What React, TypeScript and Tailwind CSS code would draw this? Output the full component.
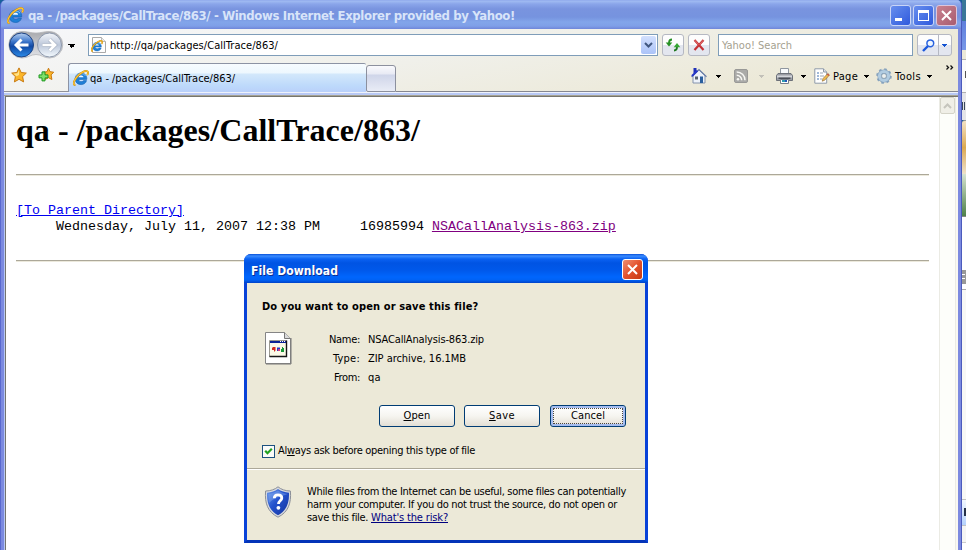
import { useLayoutEffect, useRef } from "react";
import type { ReactNode } from "react";

/** A single line of text whose tracking is adjusted so that it spans `width` pixels. */
function Fit({ width, className = "", children }: { width: number; className?: string; children: ReactNode }) {
  const ref = useRef<HTMLSpanElement>(null);
  useLayoutEffect(() => {
    const el = ref.current;
    if (!el) return;
    el.style.letterSpacing = "0px";
    const natural = el.getBoundingClientRect().width;
    const count = (el.textContent ?? "").length;
    el.style.letterSpacing = `${(width - natural) / count}px`;
  }, [width]);
  return (
    <span ref={ref} className={`inline-block shrink-0 whitespace-pre ${className}`}>
      {children}
    </span>
  );
}

function IELogo({ className = "" }: { className?: string }) {
  return (
    <svg viewBox="0 0 16 16" className={className}>
      <path d="M13.800 9.400H5.600c.2 1.500 1.200 2.200 2.700 2.200 1 0 1.800-.3 2.200-1h3.100c-.8 2.500-2.800 4-5.500 4C4.600 14.600 2.200 12.300 2.200 9S4.600 3 8 3c3.700 0 6.100 2.400 5.800 6.400Z" fill="#1f7fd6" stroke="#1261b4" strokeWidth=".6" />
      <path d="M5.600 7.300h4.900C10.300 6 9.400 5.500 8 5.500S5.900 6 5.600 7.300Z" fill="#eef6ff" />
      <path d="M3.400 6.300C4.300 4.500 6 3.700 8 3.700c2 0 3.600.7 4.500 2.200" fill="none" stroke="#7cc4fa" strokeWidth="1" />
      <path d="M2.400 15C-.3 15.300.4 11.200 3.500 7.300 6.800 3.200 12.100.200 14.300 1.300c1.100.6 1 2-.1 3.800" fill="none" stroke="#c98a10" strokeWidth="1.900" />
      <path d="M2.400 15C-.3 15.300.4 11.200 3.500 7.300 6.800 3.200 12.100.200 14.300 1.300c1.100.6 1 2-.1 3.800" fill="none" stroke="#fcc838" strokeWidth="1.100" />
    </svg>
  );
}

function NavButtons() {
  return (
    <svg viewBox="0 0 56 30" className="h-[30px] w-[56px] shrink-0">
      <defs>
        <linearGradient id="back" x1="0" y1="0" x2="0" y2="1">
          <stop offset="0" stopColor="#b8d0f0" />
          <stop offset=".35" stopColor="#3f78cc" />
          <stop offset=".55" stopColor="#1149a4" />
          <stop offset="1" stopColor="#2b8be8" />
        </linearGradient>
        <linearGradient id="fwd" x1="0" y1="0" x2="0" y2="1">
          <stop offset="0" stopColor="#f4f6fa" />
          <stop offset=".5" stopColor="#bcc7da" />
          <stop offset="1" stopColor="#f4fafe" />
        </linearGradient>
        <linearGradient id="rim" x1="0" y1="0" x2="0" y2="1">
          <stop offset="0" stopColor="#a8a9ad" />
          <stop offset="1" stopColor="#e3e5ea" />
        </linearGradient>
      </defs>
      <path d="M14 1.500c6 0 8.500 1.500 14 1.500s7.500-1.500 13.500-1.500a13 13 0 0 1 0 26.500c-6 0-8-3.500-13.500-3.500S20 28 14 28a13 13 0 0 1 0-26.500Z" fill="url(#rim)" stroke="#b5b6ba" strokeWidth=".8" />
      <circle cx="13.500" cy="15" r="12" fill="url(#back)" stroke="#1c4283" strokeWidth="1" />
      <circle cx="41.500" cy="15" r="12" fill="url(#fwd)" stroke="#8e99ac" strokeWidth="1" />
      <path d="M20.500 15H8.500M13.500 9.500 8 15l5.500 5.500" fill="none" stroke="#fff" strokeWidth="2.900" />
      <path d="M34.500 15h12m-5-5.500 5.500 5.500-5.500 5.500" fill="none" stroke="#a9b3c4" strokeWidth="4" />
      <path d="M34.500 15h12m-5-5.500 5.500 5.500-5.500 5.500" fill="none" stroke="#fff" strokeWidth="2.700" />
    </svg>
  );
}

function Caret({ className = "h-[3px] w-[5px]" }: { className?: string }) {
  return (
    <svg viewBox="0 0 5 3" className={`shrink-0 ${className}`} shapeRendering="crispEdges">
      <path d="M0 0h5v1H4v1H3v1H2V2H1V1H0Z" fill="currentColor" />
    </svg>
  );
}

function StarIcon() {
  return (
    <svg viewBox="0 0 16 16" className="h-4 w-4 shrink-0">
      <path d="m8 .9 2.200 4.600 5.100.6-3.700 3.500 1 5.300L8 12.300l-4.600 2.600 1-5.300L.7 6.100l5.100-.6Z" fill="#fbb62a" stroke="#c87a12" strokeWidth="1" strokeLinejoin="round" />
      <path d="M8 2.800 6.500 6.300l-3.800.5 2.800 2.500L8 8Z" fill="#ffe38a" />
    </svg>
  );
}

function AddStarIcon() {
  return (
    <svg viewBox="0 0 16 16" className="h-4 w-4 shrink-0">
      <path d="m10.500 1.200 1.500 3.500 3.700.5-2.600 2.700.8 4.600-3.400-1.800-3.300 1.800.6-4.600L5.300 5.200 9 4.700Z" fill="#fbb62a" stroke="#c87a12" strokeWidth="1" strokeLinejoin="round" />
      <path d="M4 4.900h3v3h3v3H7v3H4v-3H1v-3h3Z" fill="#7fe06a" stroke="#1f9a22" strokeWidth="1" />
    </svg>
  );
}

function HomeIcon() {
  return (
    <svg viewBox="0 0 16 16" className="h-4 w-4 shrink-0">
      <path d="M2 7.500 8 2l6 5.500V15H2Z" fill="#edf2fa" stroke="#8392ad" strokeWidth="1" />
      <path d="M2.500 0h3v5h-3Z" fill="#2030b8" />
      <path d="M.5 8.800 8 1.500l7.500 7.300" fill="none" stroke="#6a7fa8" strokeWidth="1.200" />
      <path d="M1 8 6.500 2.600" stroke="#2638c8" strokeWidth="2" />
      <path d="M4 8.500h3v3H4Z" fill="#57626f" />
      <path d="M9 8.500h3V15H9Z" fill="#2a5f9e" />
    </svg>
  );
}

function FeedIcon() {
  return (
    <svg viewBox="0 0 16 16" className="h-4 w-4 shrink-0">
      <rect x="1.500" y="1.500" width="13" height="13" rx="1.500" fill="#aaaaa8" stroke="#999997" />
      <circle cx="5" cy="11.200" r="1.300" fill="#f7f7f3" />
      <path d="M3.700 7.200a5 5 0 0 1 5 5M3.700 3.900a8.300 8.300 0 0 1 8.300 8.300" fill="none" stroke="#f7f7f3" strokeWidth="1.500" />
    </svg>
  );
}

function PrinterIcon() {
  return (
    <svg viewBox="0 0 17 16" className="h-4 w-[17px] shrink-0">
      <path d="M4.500 6V.5h8V6" fill="#f8fafc" stroke="#8f969f" />
      <path d="M2 5.500h13l1.500 2V12.500H.5V7.500Z" fill="#9a9da4" stroke="#6d7179" />
      <path d="M1 7.500h15v2H1Z" fill="#d3d5da" />
      <path d="M2.500 9.500h12v1.500h-12Z" fill="#4a4f58" />
      <path d="M4.500 11.500h8v4h-8Z" fill="#fff" stroke="#777e89" />
      <path d="M6 12h3v2H6Z" fill="#2d9aaf" />
      <path d="M9 12h2v2H9Z" fill="#2454b8" />
    </svg>
  );
}

function PageIcon() {
  return (
    <svg viewBox="0 0 16 16" className="h-4 w-4 shrink-0">
      <path d="M.8.8h8.700l3.200 3.200v11.200H.8Z" fill="#fff" stroke="#8f9aa8" />
      <path d="M9.500.8V4h3.200" fill="#dde4ec" stroke="#8f9aa8" />
      <path d="M3 5h2M3 8h2M3 11h2" stroke="#4273b4" strokeWidth="1.200" />
      <path d="M6 5h3M6 8h4M6 11h2" stroke="#9ba5b3" strokeWidth="1" />
      <path d="m8.200 13.200.8-2.700L13.800 5.500l1.700 1.500-4.800 5.200Z" fill="#f1bd50" stroke="#9b733a" strokeWidth=".7" />
      <path d="m13.300 6 1.700 1.500" stroke="#c5504b" strokeWidth="1.400" />
    </svg>
  );
}

function GearIcon() {
  return (
    <svg viewBox="0 0 16 16" className="h-4 w-4 shrink-0">
      <circle cx="8" cy="8" r="6.600" fill="none" stroke="#8aa5be" strokeWidth="2.400" strokeDasharray="2.600 2.584" />
      <circle cx="8" cy="8" r="4.600" fill="none" stroke="#7f9dba" strokeWidth="4" />
      <circle cx="8" cy="8" r="4.600" fill="none" stroke="#b1cce1" strokeWidth="3" />
      <circle cx="8" cy="8" r="2.500" fill="#edf0ee" stroke="#738ea8" strokeWidth=".7" />
    </svg>
  );
}

const toolButton =
  "flex h-[22px] w-[22px] shrink-0 items-center justify-center rounded-[3px] border border-[#b5b8c2] bg-linear-to-b from-[#fdfdfd] from-50% to-[#e3e6ef] to-50%";

function TitleBar() {
  return (
    <header className="flex h-[29px] shrink-0 items-center bg-[linear-gradient(180deg,#89a2ea_0px,#a1bcf2_1px,#8aa5ea_4px,#7994df_9px,#7693df_17px,#82a5ea_22px,#7f9fe8_26px,#6f86d9_29px)] pt-[2px] pl-[6px]">
      <IELogo className="h-[17px] w-[17px] shrink-0" />
      <Fit width={487} className="mt-[1px] ml-[4px] font-['DejaVu_Sans_Condensed','DejaVu_Sans',sans-serif] text-[13px] leading-4 font-bold text-[#d8e4f9]">
        qa - /packages/CallTrace/863/ - Windows Internet Explorer provided by Yahoo!
      </Fit>
      <div className="ml-auto flex gap-[2px] pr-[4px]">
        <div className="flex h-[21px] w-[21px] items-end rounded-[3px] border border-[#c9d5f7] bg-linear-to-br from-[#688eee] to-[#3059dc] p-1">
          <span className="h-[3px] w-[7px] bg-white" />
        </div>
        <div className="flex h-[21px] w-[21px] items-center justify-center rounded-[3px] border border-[#c9d5f7] bg-linear-to-br from-[#688eee] to-[#3059dc]">
          <span className="h-[11px] w-[11px] border border-t-[3px] border-white" />
        </div>
        <div className="flex h-[21px] w-[21px] items-center justify-center rounded-[3px] border border-[#dcc6dc] bg-linear-to-br from-[#c98290] to-[#a85c70]">
          <svg viewBox="0 0 11 11" className="h-[11px] w-[11px]">
            <path d="m1 1 9 9M10 1l-9 9" stroke="#fff" strokeWidth="2" />
          </svg>
        </div>
      </div>
    </header>
  );
}

function AddressRow() {
  return (
    <div className="flex h-[32px] shrink-0 items-center pl-[4px]">
      <NavButtons />
      <Caret className="mt-[2px] ml-[4px] h-[4px] w-[7px]" />
      <div className="ml-[13px] flex h-[22px] w-[570px] items-center border border-[#7f9db9] bg-white pr-[1px] pl-[2px]">
        <svg viewBox="0 0 16 16" className="h-4 w-4 shrink-0">
          <path d="M1.500.5h9l4 4v11h-13Z" fill="#fdfdfd" stroke="#a9a9a9" />
          <path d="M10.500.5v4h4" fill="#eee" stroke="#b9b9b9" />
        </svg>
        <IELogo className="mt-[2px] -ml-4 h-[12px] w-[12px] shrink-0" />
        <Fit width={168} className="mt-[2px] ml-[7px] text-[11px] leading-4 text-black">
          http://qa/packages/CallTrace/863/
        </Fit>
        <div className="ml-auto flex h-[18px] w-[15px] items-center justify-center rounded-[2px] bg-linear-to-b from-[#d3e0fd] to-[#abc3f8]">
          <svg viewBox="0 0 9 6" className="h-[6px] w-[9px]">
            <path d="m1 1 3.500 3.500L8 1" fill="none" stroke="#41577f" strokeWidth="2" />
          </svg>
        </div>
      </div>
      <div className={`ml-[4px] ${toolButton}`}>
        <svg viewBox="0 0 16 16" className="h-4 w-4 shrink-0">
          <path d="M7 2.500C4.500 2.500 4 4 4 6" fill="none" stroke="#279025" strokeWidth="1.800" />
          <path d="M.7 5.500h6.600L4 9.500Z" fill="#279025" />
          <path d="M9 13.500c2.500 0 3-1.500 3-3.500" fill="none" stroke="#1f7820" strokeWidth="1.800" />
          <path d="M8.700 10.200h6.600L12 6Z" fill="#35a632" />
        </svg>
      </div>
      <div className={`ml-[4px] ${toolButton}`}>
        <svg viewBox="0 0 12 12" className="h-3 w-3 shrink-0">
          <path d="m1.500 1 9 10M10.500 1l-9 10" stroke="#c63236" strokeWidth="2.200" />
          <path d="m1.500 1 4 4.500M10.500 1l-4 4.500" stroke="#e07070" strokeWidth="1" />
        </svg>
      </div>
      <div className="ml-[8px] flex h-[22px] w-[195px] items-center border border-[#7f9db9] bg-white pl-[3px]">
        <Fit width={70} className="mt-[2px] text-[11px] leading-4 text-[#a5a190]">
          Yahoo! Search
        </Fit>
      </div>
      <div className="ml-[4px] flex h-[22px] w-[35px] items-center rounded-[3px] border border-[#b5b8c2] bg-linear-to-b from-[#fdfdfd] from-50% to-[#e3e6ef] to-50%">
        <div className="flex h-full w-[21px] items-center justify-center border-r border-[#b5b8c2]">
          <svg viewBox="0 0 13 13" className="h-[13px] w-[13px]">
            <path d="m1 12 5-5" stroke="#1c58dc" strokeWidth="2.400" />
            <circle cx="8.300" cy="4.300" r="3.400" fill="#eef6ff" stroke="#2862df" strokeWidth="1.500" />
          </svg>
        </div>
        <Caret className="ml-[3px] h-[3px] w-[5px] text-[#1253d2]" />
      </div>
    </div>
  );
}

function TabRow() {
  return (
    <div className="flex h-[31px] shrink-0">
      <div className="flex w-[64px] items-center gap-[11px] border-b border-[#919299] pb-[2px] pl-[7px]">
        <StarIcon />
        <AddStarIcon />
      </div>
      <div className="mt-[2px] flex h-[29px] w-[298px] items-center rounded-tl-[3px] rounded-tr-[2px] border-t border-l border-[#8c93a4] bg-[linear-gradient(180deg,#f7fcff_0px,#edf7fe_9px,#d3e8fb_10px,#bdd9fb_22px,#b9cffa_29px)] pl-[4px]">
        <IELogo className="h-[16px] w-[16px] shrink-0" />
        <Fit width={145} className="mt-[1px] ml-[1px] text-[11px] leading-4 text-black">
          qa - /packages/CallTrace/863/
        </Fit>
      </div>
      <div className="mt-[4px] h-[27px] w-[30px] rounded-t-[3px] rounded-bl-[2px] border border-[#8c909e] bg-[linear-gradient(180deg,#fafafd_0px,#e8eaf4_8px,#cfd5e9_9px,#e9ecf6_25px)]" />
      <div className="flex flex-1 items-center border-b border-[#858791] text-[11px] text-black">
        <div className="ml-[295px] flex h-full items-center">
          <HomeIcon />
          <Caret className="ml-[9px] h-[3px] w-[5px]" />
          <div className="ml-[12px] flex items-center">
            <FeedIcon />
            <Caret className="ml-[10px] h-[3px] w-[5px] text-[#c2c0b8]" />
          </div>
          <div className="ml-[12px] flex items-center">
            <PrinterIcon />
            <Caret className="ml-[8px] h-[3px] w-[5px]" />
          </div>
          <div className="ml-[8px] flex items-center">
            <PageIcon />
            <Fit width={25} className="mt-[1px] ml-[3px] leading-4">Page</Fit>
            <Caret className="ml-[6px] h-[3px] w-[5px]" />
          </div>
          <div className="ml-[7px] flex items-center">
            <GearIcon />
            <Fit width={26} className="mt-[1px] ml-[3px] leading-4">Tools</Fit>
            <Caret className="ml-[6px] h-[3px] w-[5px]" />
          </div>
        </div>
        <svg viewBox="0 0 8 5" className="mr-[4px] mb-[17px] ml-auto h-[5px] w-[8px] shrink-0">
          <path d="m.5.5 2 2-2 2M4.500.5l2 2-2 2" fill="none" stroke="#111" strokeWidth="1.300" />
        </svg>
      </div>
    </div>
  );
}

function Rule() {
  return <div className="h-[2px] w-[913px] border-t border-b border-t-[#aca899] border-b-[#ece9dc]" />;
}

function Listing() {
  return (
    <main className="flex min-h-0 flex-1 border-t border-l border-[#76756e] bg-white">
      <div className="w-[933px] pl-[10px]">
        <h1 className="mt-[15px] h-[37px] font-['Liberation_Serif',serif] text-[32px] leading-[37px] font-bold text-black">
          <Fit width={404}>qa - /packages/CallTrace/863/</Fit>
        </h1>
        <div className="mt-[25px]">
          <Rule />
        </div>
        <pre className="mt-[27px] h-[34px] font-['Liberation_Mono',monospace] text-[13.333px] leading-[16px] text-black">
          <a className="text-[#0000f0] underline">[To Parent Directory]</a>
          {"\n     Wednesday, July 11, 2007 12:38 PM     16985994 "}
          <a className="text-[#800080] underline">NSACallAnalysis-863.zip</a>
        </pre>
        <div className="mt-[23px]">
          <Rule />
        </div>
      </div>
      <div className="w-[17px] shrink-0 border-x border-[#ebebe4] bg-[#fdfefa]">
        <div className="flex h-[17px] w-[15px] items-center justify-center rounded-[2px] border border-[#d5d4c8] bg-[#f0efe7]">
          <svg viewBox="0 0 9 6" className="h-[6px] w-[9px]">
            <path d="m1 5 3.500-3.500L8 5" fill="none" stroke="#c6c5bd" strokeWidth="2" />
          </svg>
        </div>
      </div>
      <div className="flex-1 bg-[#f9f8f2]" />
    </main>
  );
}

function FileIcon() {
  return (
    <svg viewBox="0 0 27 33" className="h-[33px] w-[27px] shrink-0">
      <path d="M.5.5h19l6 6v25H.5Z" fill="#fff" stroke="#858585" />
      <path d="M19.500.5v6h6" fill="#d9d9d9" stroke="#777" />
      <path d="M26 6v26H1" fill="none" stroke="#777" />
      <path d="M4.500 8.500h17v16h-17Z" fill="#fbfae8" stroke="#9a9890" />
      <path d="M4.500 24.500h17v-16" fill="none" stroke="#161616" strokeWidth="1.400" />
      <path d="M5 9h16v2H5Z" fill="#0b2395" />
      <path d="M15 9.500h1m1 0h1m1 0h1" stroke="#fff" />
      <path d="M8 15h2.500v3.500L9 20v-2H7v-2Z" fill="#d22a20" />
      <path d="M12 15.500h3v1.500h-1v2h-2Z" fill="#2b35c3" />
      <path d="M17 15h1v1h1v4h-3v-3h1Z" fill="#18983a" />
      <path d="M13 17h2v2h-2Z" fill="#ce3c80" />
    </svg>
  );
}

function ShieldIcon() {
  return (
    <svg viewBox="0 0 28 32" className="h-8 w-7 shrink-0">
      <defs>
        <linearGradient id="shield" x1="0" y1="0" x2="1" y2="1">
          <stop offset="0" stopColor="#6d9bea" />
          <stop offset=".45" stopColor="#2452cd" />
          <stop offset="1" stopColor="#14339c" />
        </linearGradient>
      </defs>
      <path d="M14 .8c3 2.600 7.500 4.200 12.400 4.200 1 12-2 21-12.400 26.200C3.600 26 .6 17 1.600 5 6.500 5 11 3.400 14 .8Z" fill="#d6d9df" stroke="#8b8f98" strokeWidth="1" />
      <path d="M14 3c3 2.200 6.900 3.500 11 3.700.4 10.500-2.500 18-11 22.600C5.500 24.700 2.600 17.200 3 6.700 7.100 6.500 11 5.200 14 3Z" fill="url(#shield)" />
      <path d="M4.300 8C8 7.500 11 6.500 14 4.500c3 2 6 3 9.700 3.500-5 2-13 3-18.700 9-.6-3-.8-6-.7-9Z" fill="#8db4f2" opacity=".4" />
      <path d="M10.300 12.200c0-2.400 1.600-3.400 3.700-3.400s3.800 1.100 3.800 3.200c0 2.800-3.300 2.900-3.300 6" fill="none" stroke="#fff" strokeWidth="2.800" />
      <circle cx="14.400" cy="21.800" r="1.900" fill="#fff" />
    </svg>
  );
}

function FileRow({ label, labelWidth, value, valueWidth }: { label: string; labelWidth: number; value: string; valueWidth: number }) {
  return (
    <div className="flex h-[19px] items-center">
      <div className="flex w-[69px] justify-end">
        <Fit width={labelWidth}>{label}</Fit>
      </div>
      <Fit width={valueWidth} className="ml-[8px]">{value}</Fit>
    </div>
  );
}

const dialogButton =
  "flex h-[22px] w-[76px] items-center justify-center rounded-[3px] border border-[#003c74] bg-linear-to-b from-white via-[#f6f5f0] to-[#e3dfd5] pt-[1px]";

function DownloadDialog() {
  return (
    <section className="absolute top-[254px] left-[244px] flex h-[289px] w-[404px] flex-col overflow-hidden rounded-t-[7px] bg-[#0842d8] text-[11px] text-black">
      <div className="flex h-[29px] shrink-0 items-center justify-between bg-[linear-gradient(180deg,#0850d8_0px,#3b8cff_2px,#0a62f2_5px,#0054e3_9px,#0058ea_16px,#0066fd_23px,#0062f5_26px,#0042c8_29px)] pt-[2px] pr-[5px] pl-[7px]">
        <Fit width={87} className="mt-[2px] text-[12px] leading-4 font-bold text-white [text-shadow:1px_1px_#0c2f91]">
          File Download
        </Fit>
        <div className="flex h-[21px] w-[21px] items-center justify-center rounded-[3px] border border-white bg-linear-to-br from-[#ef8d70] via-[#e3512c] to-[#c53a12]">
          <svg viewBox="0 0 11 11" className="h-[11px] w-[11px]">
            <path d="m1 1 9 9M10 1l-9 9" stroke="#fff" strokeWidth="2" />
          </svg>
        </div>
      </div>
      <div className="flex flex-1 flex-col border-x-[3px] border-b-[3px] border-x-[#0842d8] border-b-[#0434b8] bg-[#ece9d8]">
        <div className="h-[186px] border-b border-[#aca899] pl-[15px]">
          <p className="mt-[16px] h-[16px]">
            <Fit width={216} className="leading-4 font-bold">Do you want to open or save this file?</Fit>
          </p>
          <div className="mt-[14px] flex items-start">
            <div className="mt-[3px] ml-[3px]">
              <FileIcon />
            </div>
            <div className="mt-[2px] -ml-[1px] flex flex-col">
              <FileRow label="Name:" labelWidth={31} value="NSACallAnalysis-863.zip" valueWidth={116} />
              <FileRow label="Type:" labelWidth={27} value="ZIP archive, 16.1MB" valueWidth={98} />
              <FileRow label="From:" labelWidth={26} value="qa" valueWidth={13} />
            </div>
          </div>
          <div className="mt-[17px] flex pl-[117px]">
            <div className={dialogButton}>
              <Fit width={27}><u>O</u>pen</Fit>
            </div>
            <div className={`ml-[9px] ${dialogButton}`}>
              <Fit width={26}><u>S</u>ave</Fit>
            </div>
            <div className={`ml-[10px] ${dialogButton} shadow-[inset_0_0_0_2px_#a5bdf0]`}>
              <span className="-mt-[1px] flex h-[16px] w-[70px] items-center justify-center border border-dotted border-[#4a4540] pt-[1px]">
                <Fit width={34}>Cancel</Fit>
              </span>
            </div>
          </div>
          <div className="mt-[16px] flex items-center">
            <span className="flex h-[13px] w-[13px] items-center justify-center border border-[#1c5180] bg-[#fbfbf9]">
              <svg viewBox="0 0 9 9" className="h-[9px] w-[9px]">
                <path d="m1.200 3.700 2.300 2.500L7.800 1.800" fill="none" stroke="#21a121" strokeWidth="2.200" />
              </svg>
            </span>
            <Fit width={197} className="ml-[3px] leading-4">
              Al<u>w</u>ays ask before opening this type of file
            </Fit>
          </div>
        </div>
        <div className="flex flex-1 border-t border-white pl-[17px]">
          <div className="mt-[16px]">
            <ShieldIcon />
          </div>
          <div className="mt-[15px] ml-[15px] flex flex-col leading-[13px]">
            <Fit width={319}>While files from the Internet can be useful, some files can potentially</Fit>
            <Fit width={310}>harm your computer. If you do not trust the source, do not open or</Fit>
            <div className="flex">
              <Fit width={64}>save this file. </Fit>
              <Fit width={77} className="text-[#00007f] underline">What's the risk?</Fit>
            </div>
          </div>
        </div>
      </div>
    </section>
  );
}

/** Sliver of the windows that sit behind the browser at the right screen edge. */
function BackgroundWindows() {
  return (
    <aside className="flex w-[4px] shrink-0 flex-col overflow-hidden text-[10px] text-black">
      <div className="h-[21px] bg-[#3a7799]" />
      <div className="h-[29px] bg-linear-to-b from-[#5f7fdc] to-[#7898e8]" />
      <div className="h-[9px] bg-[#ece9d8]" />
      <div className="h-[34px] border-y border-[#b0b0b0] bg-[#fafafa]">
        <span className="mt-[11px] block h-[7px] w-[4px] border-r border-[#555]" />
      </div>
      <div className="h-[27px] bg-[#e5e5e8] pt-[9px]">
        <span className="block h-[8px] w-[3px] border-x border-[#38485a]" />
      </div>
      <div className="h-[54px] rounded-tl-[3px] border-t border-[#999] bg-linear-to-b from-[#f3e3c4] via-[#dca94e] to-[#eee2ca]" />
      <div className="h-[43px] border-b border-[#888] bg-linear-to-b from-[#d6e3d0] to-[#4f824b]" />
      <div className="h-[53px] bg-white" />
      <div className="h-[14px] bg-[#999] pt-[4px]">
        <span className="block h-[5px] w-[3px] border-y border-white" />
      </div>
      <div className="h-[6px] border-b border-[#aaa] bg-white" />
      <div className="h-[209px] bg-[#f8f8f5]" />
      <div className="h-[27px] border-y border-[#c2c2c2] bg-linear-to-b from-[#f2f7ff] to-[#b5d2fc] pt-[8px]">
        <span className="block h-[8px] w-[4px] border-r-2 border-[#26324a]" />
      </div>
      <div className="h-[17px] border-b border-[#ccc] bg-[#f5f5f3]" />
      <div className="flex-1 bg-white" />
    </aside>
  );
}

export default function App() {
  return (
    <div className="relative flex h-[550px] w-[966px] overflow-hidden bg-[#17619b] font-['DejaVu_Sans_Condensed','DejaVu_Sans',sans-serif] leading-normal">
      <div className="flex w-[962px] shrink-0 flex-col overflow-hidden rounded-tl-[6px] rounded-tr-[5px] border-r border-l border-r-[#4c5bbd] border-l-[#5969cf] bg-[#7c8ae0]">
        <TitleBar />
        <div className="mr-[3px] ml-[3px] flex min-h-0 flex-1 flex-col bg-[#b9c9f5]">
          <div className="bg-[linear-gradient(170deg,#f6f7fa_0%,#f0f0ea_45%,#ece9d8_80%)]">
            <AddressRow />
            <TabRow />
          </div>
          <div className="h-[4px] shrink-0 border-t border-b border-t-[#eef2fb] border-b-[#a6a393] bg-[#b9c9f5]" />
          <div className="flex min-h-0 flex-1 pl-[1px]">
            <Listing />
          </div>
        </div>
      </div>
      <BackgroundWindows />
      <DownloadDialog />
    </div>
  );
}
